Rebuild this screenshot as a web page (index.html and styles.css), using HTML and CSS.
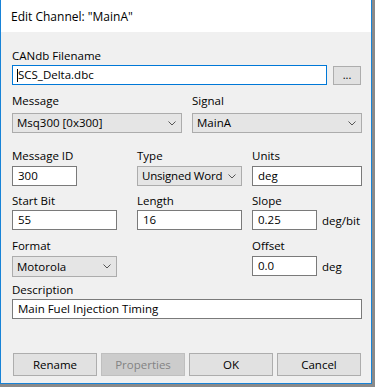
FILE: index.html
```html
<!DOCTYPE html>
<html lang="en">

<head>
    <meta charset="UTF-8">
    <title>Edit Channel</title>
    <link rel="stylesheet" href="styles.css">
</head>

<body>
    <div class="window">
        <div class="titlebar">Edit Channel: "MainA"</div>

        <div class="content">
            <div class="group g1">
                <div class="label">CANdb Filename</div>
                <div class="line ctl">
                    <div class="input focus w-file"><span class="caret"></span>SCS_Delta.dbc</div>
                    <div class="btn browse">...</div>
                </div>
            </div>

            <div class="grouprow g2">
                <div class="group w-half">
                    <div class="label">Message</div>
                    <div class="combo ctl w-half">Msq300 [0x300]<svg class="chev" width="8" height="5" viewBox="0 0 8 5"><path d="M0.5 0.5 L4 4 L7.5 0.5" fill="none" stroke="#555" stroke-width="1"/></svg></div>
                </div>
                <div class="group w-half">
                    <div class="label">Signal</div>
                    <div class="combo ctl w-half">MainA<svg class="chev" width="8" height="5" viewBox="0 0 8 5"><path d="M0.5 0.5 L4 4 L7.5 0.5" fill="none" stroke="#555" stroke-width="1"/></svg></div>
                </div>
            </div>

            <div class="grouprow g3">
                <div class="group col1">
                    <div class="label">Message ID</div>
                    <div class="input ctl w-short">300</div>
                </div>
                <div class="group col2">
                    <div class="label">Type</div>
                    <div class="combo ctl w-mid narrow">Unsigned Word<svg class="chev" width="8" height="5" viewBox="0 0 8 5"><path d="M0.5 0.5 L4 4 L7.5 0.5" fill="none" stroke="#555" stroke-width="1"/></svg></div>
                </div>
                <div class="group col3">
                    <div class="label">Units</div>
                    <div class="input ctl w-units">deg</div>
                </div>
            </div>

            <div class="grouprow g4">
                <div class="group col1">
                    <div class="label">Start Bit</div>
                    <div class="input ctl w-mid">55</div>
                </div>
                <div class="group col2">
                    <div class="label">Length</div>
                    <div class="input ctl w-mid">16</div>
                </div>
                <div class="group col3">
                    <div class="label">Slope</div>
                    <div class="line ctl">
                        <div class="input w-short">0.25</div>
                        <span class="unit">deg/bit</span>
                    </div>
                </div>
            </div>

            <div class="grouprow g5">
                <div class="group col12">
                    <div class="label">Format</div>
                    <div class="combo ctl w-mid tall">Motorola<svg class="chev" width="8" height="5" viewBox="0 0 8 5"><path d="M0.5 0.5 L4 4 L7.5 0.5" fill="none" stroke="#555" stroke-width="1"/></svg></div>
                </div>
                <div class="group col3">
                    <div class="label">Offset</div>
                    <div class="line ctl">
                        <div class="input w-short">0.0</div>
                        <span class="unit">deg</span>
                    </div>
                </div>
            </div>

            <div class="group g6">
                <div class="label">Description</div>
                <div class="input ctl w-full">Main Fuel Injection Timing</div>
            </div>

            <div class="buttons">
                <div class="btn">Rename</div>
                <div class="btn disabled">Properties</div>
                <div class="btn">OK</div>
                <div class="btn">Cancel</div>
            </div>
        </div>
    </div>
</body>

</html>
```

FILE: styles.css
```css
body {
    margin: 0;
    width: 375px;
    height: 387px;
    background-color: #8a8a8a;
    font-family: 'Open Sans', 'Noto Sans', sans-serif;
    font-size: 11.5px;
    color: #000;
    overflow: hidden;
}

.window {
    width: 372px;
    height: 384px;
    border: 1px solid #1883d7;
    border-top: none;
    background-color: #f0f0f0;
    box-sizing: border-box;
    overflow: hidden;
}

.titlebar {
    height: 32px;
    line-height: 34px;
    padding-left: 10px;
    background-color: #fff;
    font-size: 12px;
}

.content {
    padding: 16px 0 0 11px;
}

.label {
    height: 16px;
    line-height: 16px;
}

.line {
    display: flex;
    align-items: center;
}

.grouprow {
    display: flex;
}

.input {
    height: 20px;
    line-height: 18px;
    box-sizing: border-box;
    background-color: #fff;
    border: 1px solid #7a7a7a;
    padding-left: 5px;
    white-space: nowrap;
    position: relative;
}

.input.focus {
    border-color: #0078d7;
}

.caret {
    position: absolute;
    left: 4px;
    top: 3px;
    width: 1px;
    height: 13px;
    background-color: #000;
}

.combo {
    height: 20px;
    line-height: 18px;
    box-sizing: border-box;
    background-color: #e5e5e5;
    border: 1px solid #acacac;
    padding-left: 4px;
    padding-right: 5px;
    display: flex;
    align-items: center;
    justify-content: space-between;
    white-space: nowrap;
}

.combo.narrow {
    letter-spacing: -0.2px;
}

.combo.tall {
    height: 21px;
}

.chev {
    display: block;
    flex-shrink: 0;
}

.btn {
    box-sizing: border-box;
    background-color: #e1e1e1;
    border: 1px solid #adadad;
    text-align: center;
}

.browse {
    width: 28px;
    height: 19px;
    line-height: 15px;
    margin-left: 6px;
    margin-top: 1px;
    font-size: 11px;
}

.w-file { width: 315px; }
.w-half { width: 170px; }
.w-short { width: 65px; }
.w-mid { width: 105px; }
.w-units { width: 110px; }
.w-full { width: 350px; }

.col1 { width: 125px; }
.col2 { width: 115px; }
.col12 { width: 240px; }
.col3 { width: 110px; }

.g2 .group:first-child { margin-right: 10px; }

.unit {
    margin-left: 5px;
}

/* vertical rhythm, measured from the dialog */
.g1 .ctl { margin-top: 1px; }
.g2 { margin-top: 8px; }
.g2 .ctl { margin-top: 4px; }
.g3 { margin-top: 15px; }
.g3 .ctl { margin-top: 2px; }
.g4 { margin-top: 7px; }
.g4 .ctl { margin-top: 1px; }
.g5 { margin-top: 8px; }
.g5 .ctl { margin-top: 2px; }
.g5 .input { height: 20px; }
.g6 { margin-top: 5px; }
.g6 .ctl { margin-top: 1px; }

.buttons {
    display: flex;
    gap: 4px;
    margin-top: 34px;
    padding-left: 1px;
}

.buttons .btn {
    width: 84px;
    height: 23px;
    line-height: 21px;
}

.btn.disabled {
    background-color: #cccccc;
    border-color: #bfbfbf;
    color: #838383;
}
```
